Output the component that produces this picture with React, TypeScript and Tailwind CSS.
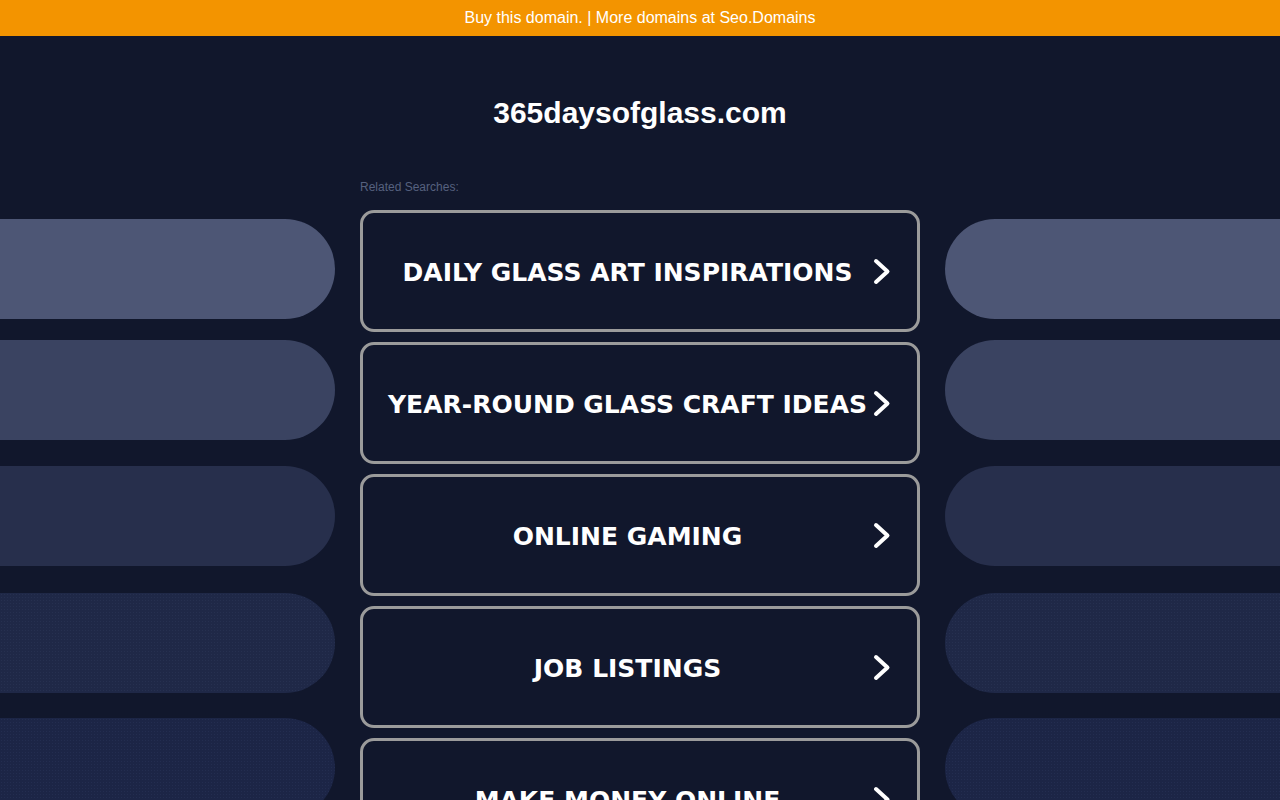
import React from 'react';

const searches = [
	'Daily Glass Art Inspirations',
	'Year-Round Glass Craft Ideas',
	'Online Gaming',
	'Job Listings',
	'Make Money Online',
];

const pills = [
	{ color: 'bg-[#4d5675]', gap: 'mt-0' },
	{ color: 'bg-[#3a4361]', gap: 'mt-[21px]' },
	{ color: 'bg-[#272f4c]', gap: 'mt-[26px]' },
	{ color: 'bg-[#1f2847]', gap: 'mt-[27px]' },
	{ color: 'bg-[#1c2546]', gap: 'mt-[25px]' },
];

function Chevron() {
	return (
		<svg width="18" height="27" viewBox="0 0 18 27" fill="none" className="shrink-0">
			<path d="M3 3 L14.5 13.5 L3 24" stroke="white" strokeWidth="4" strokeLinecap="round" strokeLinejoin="round" />
		</svg>
	);
}

function SidePills({ side }: { side: 'left' | 'right' }) {
	return (
		<div className="flex flex-col pt-[88px]">
			{pills.map((pill, index) => (
				<div
					key={index}
					className={`h-[100px] ${pill.color} ${pill.gap} ${side === 'left' ? 'rounded-r-full' : 'rounded-l-full'} ${index > 2 ? 'bg-[radial-gradient(circle,rgba(120,140,190,0.08)_0.6px,transparent_0.8px)] bg-[length:3px_3px]' : ''}`}
				/>
			))}
		</div>
	);
}

export default function App() {
	return (
		<div className="h-[800px] overflow-hidden bg-[#11172c] font-['Liberation_Sans',Arial,sans-serif]">
			<div className="flex h-[36px] items-center justify-center bg-[#f39400] text-[16px] text-white">
				Buy this domain. | More domains at Seo.Domains
			</div>

			<h1 className="pt-[59px] text-center text-[30px] font-bold leading-[36px] text-white">365daysofglass.com</h1>

			<div className="grid grid-cols-[335px_560px_335px] gap-x-[25px]">
				<SidePills side="left" />

				<div>
					<p className="mt-[49px] text-[12px] leading-[14px] text-[#56617f]">Related Searches:</p>
					<div className="mt-[16px] flex flex-col gap-[10px]">
						{searches.map((item) => (
							<a
								key={item}
								href="#"
								className="flex h-[122px] items-center rounded-[14px] border-[3px] border-[#9b9b9b] pl-[19px] pr-[26px]"
							>
								<span className="flex-1 pt-[3px] text-center font-['DejaVu_Sans',Verdana,sans-serif] text-[25px] font-bold uppercase text-white">
									{item}
								</span>
								<Chevron />
							</a>
						))}
					</div>
				</div>

				<SidePills side="right" />
			</div>
		</div>
	);
}
